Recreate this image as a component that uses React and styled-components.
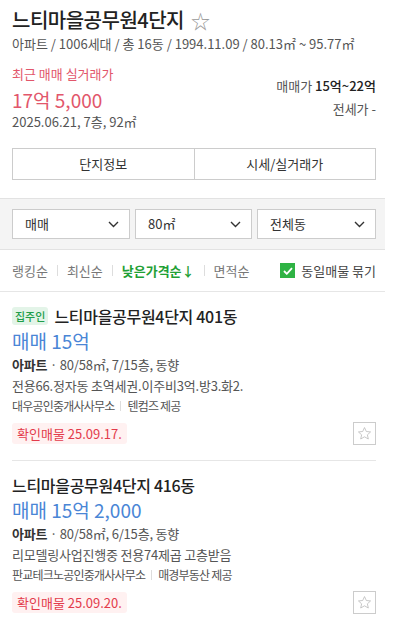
import React from "react";
import styled, { createGlobalStyle } from "styled-components";

const Global = createGlobalStyle`
  html, body { margin: 0; padding: 0; background: #fff; }
  body { font-family: "Noto Sans CJK KR", "Noto Sans", sans-serif; color: #222; }
  * { box-sizing: border-box; }
`;

const Page = styled.div`
  width: 385px;
`;

const Header = styled.div`
  padding: 6px 9px 0 12px;
`;

const TitleRow = styled.div`
  display: flex;
  align-items: center;
  gap: 7px;
  height: 28px;
`;

const Title = styled.h1`
  margin: 0;
  font-size: 20px;
  line-height: 28px;
  font-weight: 500;
  color: #222;
  letter-spacing: -0.5px;
`;

const Star = styled.span`
  font-size: 19px;
  color: #999;
  line-height: 1;
`;

const Meta = styled.div`
  font-size: 13px;
  line-height: 18px;
  color: #555;
  margin-top: 1px;
`;

const PriceBlock = styled.div`
  display: flex;
  justify-content: space-between;
  align-items: flex-start;
  margin-top: 12px;
`;

const Recent = styled.div`
  display: flex;
  flex-direction: column;
`;

const RecentLabel = styled.div`
  font-size: 13px;
  color: #e2566b;
  line-height: 18px;
`;

const RecentPrice = styled.div`
  font-size: 19px;
  color: #e2566b;
  font-weight: 400;
  line-height: 26px;
  margin-top: 4px;
`;

const RecentDate = styled.div`
  font-size: 13px;
  color: #555;
  line-height: 18px;
`;

const Range = styled.div`
  display: flex;
  flex-direction: column;
  align-items: flex-end;
  gap: 5px;
  margin-top: 12px;
  font-size: 13px;
  color: #555;
  line-height: 18px;
`;

const Strong = styled.b`
  color: #222;
  font-weight: 500;
`;

const Tabs = styled.div`
  display: flex;
  margin-top: 17px;
  border: 1px solid #ccc;
  height: 32px;
`;

const Tab = styled.div`
  flex: 1;
  display: flex;
  align-items: center;
  justify-content: center;
  font-size: 13px;
  line-height: 18px;
  color: #333;
  & + & { border-left: 1px solid #ccc; }
`;

const FilterBar = styled.div`
  margin-top: 18px;
  background: #f4f4f4;
  border-top: 1px solid #e2e2e2;
  border-bottom: 1px solid #e2e2e2;
  padding: 10px 9px 10px 12px;
  display: grid;
  grid-template-columns: 118px 117px 119px;
  gap: 5px;
`;

const Select = styled.div`
  height: 30px;
  background: #fff;
  border: 1px solid #ccc;
  display: flex;
  align-items: center;
  justify-content: space-between;
  padding: 0 10px 0 12px;
  font-size: 13px;
  line-height: 18px;
  color: #333;
`;

const SortRow = styled.div`
  display: flex;
  align-items: center;
  justify-content: space-between;
  padding: 0 9px 0 12px;
  height: 42px;
  border-bottom: 1px solid #e6e6e6;
`;

const Sorts = styled.div`
  display: flex;
  align-items: center;
  font-size: 13px;
  line-height: 18px;
`;

const SortItem = styled.span`
  color: ${(p) => (p.$active ? "#1fa035" : "#777")};
  font-weight: ${(p) => (p.$active ? 600 : 400)};
`;

const SortSep = styled.span`
  display: inline-block;
  width: 1px;
  height: 11px;
  background: #ddd;
  margin: 0 9px;
`;

const Check = styled.label`
  display: flex;
  align-items: center;
  gap: 6px;
  font-size: 13px;
  line-height: 18px;
  color: #444;
`;

const CheckBox = styled.span`
  width: 15px;
  height: 15px;
  background: #2fb344;
  display: flex;
  align-items: center;
  justify-content: center;
`;

const List = styled.div``;

const Item = styled.div`
  margin: 0 9px 0 12px;
  padding: 13px 0 15px;
  & + & { border-top: 1px solid #e6e6e6; }
`;

const ItemTitleRow = styled.div`
  display: flex;
  align-items: center;
  gap: 6px;
  height: 22px;
`;

const OwnerBadge = styled.span`
  font-size: 11px;
  color: #1f9d4a;
  background: #e3f4e8;
  border-radius: 3px;
  padding: 0 3px;
  line-height: 18px;
  font-weight: 500;
`;

const ItemTitle = styled.div`
  font-size: 16px;
  line-height: 22px;
  color: #222;
  font-weight: 500;
  letter-spacing: -0.3px;
`;

const ItemPrice = styled.div`
  font-size: 19px;
  color: #4a86d6;
  font-weight: 400;
  line-height: 24px;
  margin-top: 2px;
  margin-bottom: 1px;
`;

const Info = styled.div`
  font-size: 13px;
  color: #555;
  line-height: 21px;
  letter-spacing: -0.2px;
`;

const InfoType = styled.b`
  color: #333;
  font-weight: 600;
`;

const Agent = styled.div`
  font-size: 12px;
  color: #555;
  margin-top: 1px;
  line-height: 18px;
  display: flex;
  align-items: center;
  letter-spacing: -0.8px;
`;

const Sep = styled.span`
  display: inline-block;
  width: 1px;
  height: 10px;
  background: #ddd;
  margin: 0 6px;
`;

const Bottom = styled.div`
  display: flex;
  justify-content: space-between;
  align-items: center;
  margin-top: 7px;
  height: 23px;
`;

const Confirm = styled.span`
  font-size: 13px;
  color: #e33b4b;
  background: #fff1f1;
  border-radius: 3px;
  padding: 0 5px;
  line-height: 21px;
`;

const StarButton = styled.span`
  width: 23px;
  height: 23px;
  border: 1px solid #ccc;
  display: flex;
  align-items: center;
  justify-content: center;
`;

const Chevron = () => (
  <svg width="11" height="7" viewBox="0 0 11 7" fill="none">
    <path d="M1 1l4.5 4.5L10 1" stroke="#333" strokeWidth="1.4" />
  </svg>
);

const StarIcon = () => (
  <svg width="15" height="15" viewBox="0 0 24 24" fill="none">
    <path
      d="M12 2.5l2.9 6.3 6.8.7-5.1 4.6 1.5 6.7L12 17.3l-6.1 3.5 1.5-6.7-5.1-4.6 6.8-.7z"
      stroke="#bbb"
      strokeWidth="1.3"
      strokeLinejoin="round"
    />
  </svg>
);

const listings = [
  {
    owner: true,
    title: "느티마을공무원4단지 401동",
    price: "매매 15억",
    info: "80/58㎡, 7/15층, 동향",
    desc: "전용66.정자동 초역세권.이주비3억.방3.화2.",
    agent: "대우공인중개사사무소",
    provider: "텐컴즈 제공",
    date: "확인매물 25.09.17.",
  },
  {
    owner: false,
    title: "느티마을공무원4단지 416동",
    price: "매매 15억 2,000",
    info: "80/58㎡, 6/15층, 동향",
    desc: "리모델링사업진행중 전용74제곱 고층받음",
    agent: "판교테크노공인중개사사무소",
    provider: "매경부동산 제공",
    date: "확인매물 25.09.20.",
  },
];

const sorts = ["랭킹순", "최신순", "낮은가격순↓", "면적순"];

export default function App() {
  return (
    <Page>
      <Global />
      <Header>
        <TitleRow>
          <Title>느티마을공무원4단지</Title>
          <Star>☆</Star>
        </TitleRow>
        <Meta>아파트 / 1006세대 / 총 16동 / 1994.11.09 / 80.13㎡ ~ 95.77㎡</Meta>
        <PriceBlock>
          <Recent>
            <RecentLabel>최근 매매 실거래가</RecentLabel>
            <RecentPrice>17억 5,000</RecentPrice>
            <RecentDate>2025.06.21, 7층, 92㎡</RecentDate>
          </Recent>
          <Range>
            <div>
              매매가 <Strong>15억~22억</Strong>
            </div>
            <div>전세가 -</div>
          </Range>
        </PriceBlock>
        <Tabs>
          <Tab>단지정보</Tab>
          <Tab>시세/실거래가</Tab>
        </Tabs>
      </Header>
      <FilterBar>
        <Select>
          매매 <Chevron />
        </Select>
        <Select>
          80㎡ <Chevron />
        </Select>
        <Select>
          전체동 <Chevron />
        </Select>
      </FilterBar>
      <SortRow>
        <Sorts>
          {sorts.map((s, i) => (
            <React.Fragment key={s}>
              {i > 0 && <SortSep />}
              <SortItem $active={i === 2}>{s}</SortItem>
            </React.Fragment>
          ))}
        </Sorts>
        <Check>
          <CheckBox>
            <svg width="10" height="8" viewBox="0 0 10 8" fill="none">
              <path d="M1 4l2.8 2.8L9 1.2" stroke="#fff" strokeWidth="1.8" />
            </svg>
          </CheckBox>
          동일매물 묶기
        </Check>
      </SortRow>
      <List>
        {listings.map((l) => (
          <Item key={l.title}>
            <ItemTitleRow>
              {l.owner && <OwnerBadge>집주인</OwnerBadge>}
              <ItemTitle>{l.title}</ItemTitle>
            </ItemTitleRow>
            <ItemPrice>{l.price}</ItemPrice>
            <Info>
              <InfoType>아파트</InfoType> · {l.info}
            </Info>
            <Info>{l.desc}</Info>
            <Agent>
              {l.agent}
              <Sep />
              {l.provider}
            </Agent>
            <Bottom>
              <Confirm>{l.date}</Confirm>
              <StarButton>
                <StarIcon />
              </StarButton>
            </Bottom>
          </Item>
        ))}
      </List>
    </Page>
  );
}
